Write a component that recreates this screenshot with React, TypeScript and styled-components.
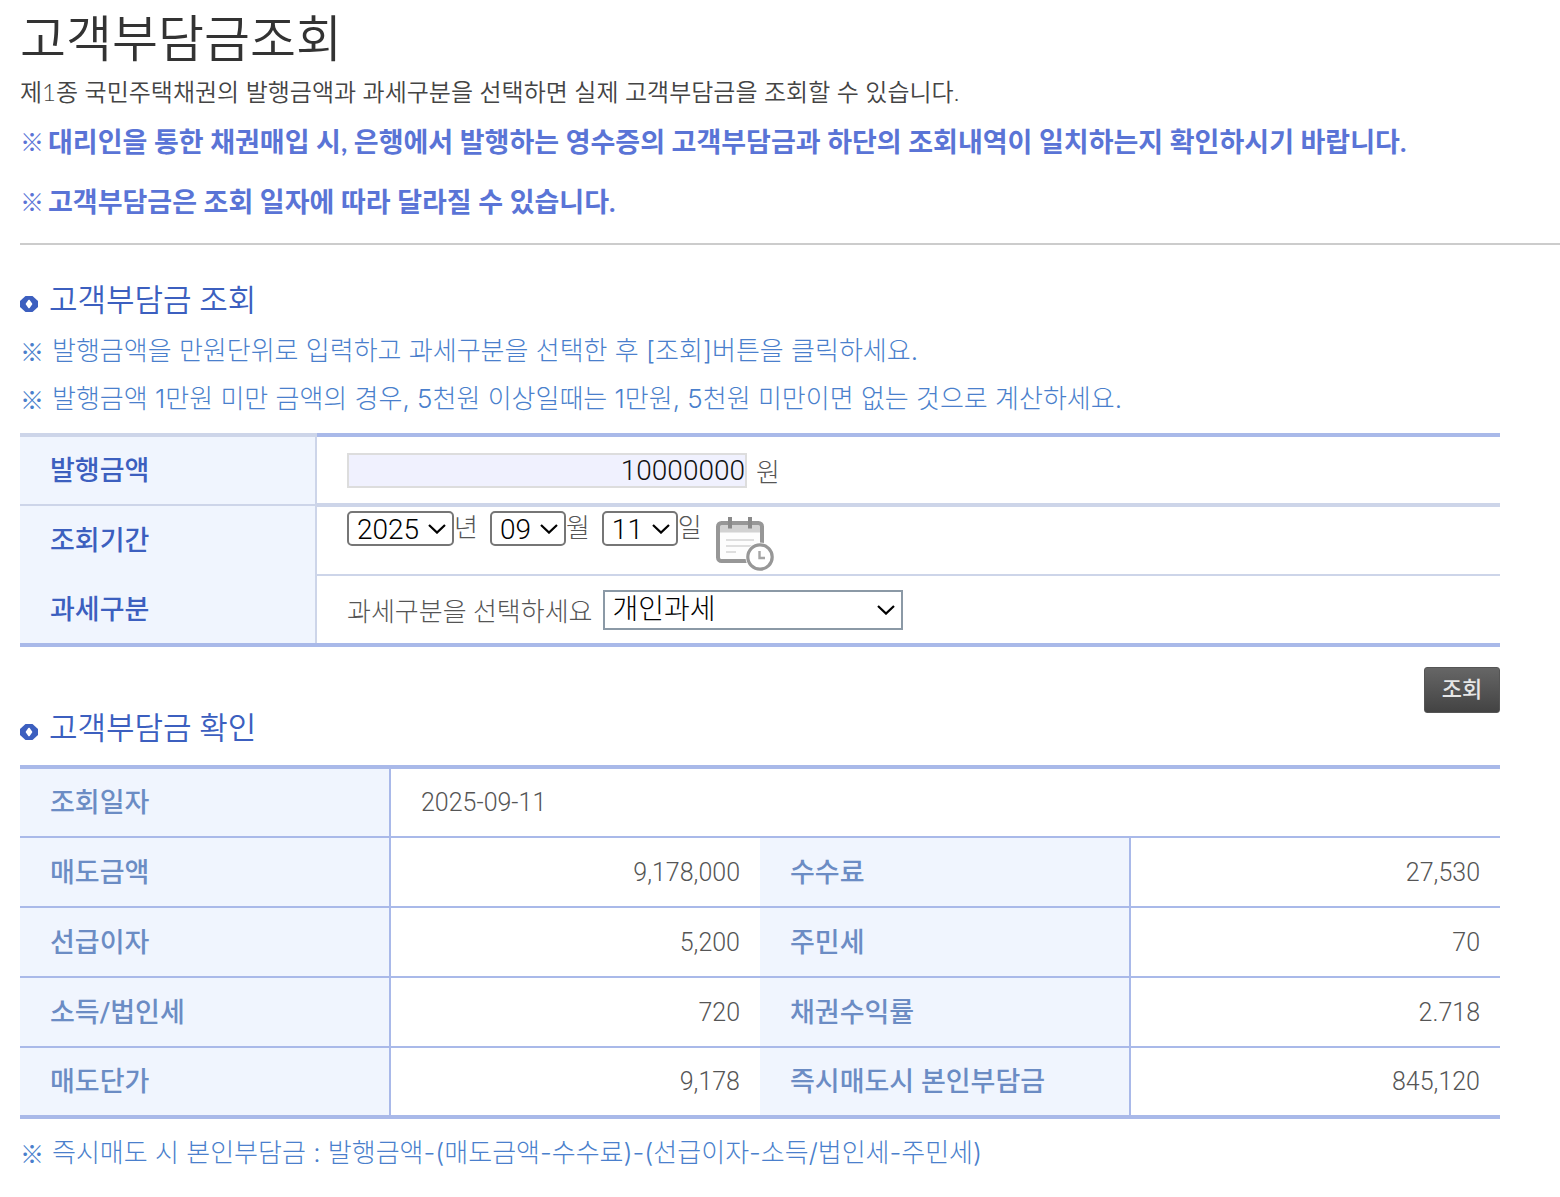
import React from "react";
import styled, { createGlobalStyle } from "styled-components";

const colors = {
  text: "#555555",
  heading: "#3c5fbf",
  note: "#4a7fcc",
  notice: "#5a74d6",
  line: "#a9b9e9",
  softLine: "#cdd5e9",
  labelBg: "#f0f5fe",
};

const GlobalStyle = createGlobalStyle`
  *, *::before, *::after { box-sizing: border-box; }
  body {
    margin: 0;
    background: #ffffff;
    color: ${colors.text};
    font-family: Roboto, "Noto Sans CJK KR", sans-serif;
    font-size: 26px;
    font-weight: 300;
  }
  button, input, select { font-family: inherit; font-weight: inherit; }
`;

const Page = styled.main`
  padding: 0 0 20px 20px;
`;

const Intro = styled.header`
  padding-bottom: 11px;
  border-bottom: 2px solid #cccccc;
  font-family: Lato, "Noto Sans CJK KR", sans-serif;
`;

const Title = styled.h1`
  margin: 0;
  font-size: 50px;
  line-height: 76px;
  font-weight: 350;
  color: #333333;
`;

const Lead = styled.p`
  margin: 0 0 4px;
  font-size: 24px;
  line-height: 32px;
  font-weight: 350;
  color: #444444;
`;

const Notice = styled.p`
  display: flex;
  margin: 0;
  font-size: 27px;
  line-height: 60px;
  font-weight: 700;
  color: ${colors.notice};
`;

const NoticeMark = styled.span`
  width: 28px;
  font-size: 24px;
`;

const Content = styled.div`
  padding: 40px 60px 0 0;
`;

const SectionHead = styled.div<{ $gap: number }>`
  display: flex;
  align-items: center;
  gap: 11px;
  margin-bottom: ${(p) => p.$gap}px;
  svg { margin-top: 6px; }
`;

const SectionTitle = styled.h2`
  margin: 0;
  font-size: 31px;
  line-height: 32px;
  font-weight: 350;
  color: ${colors.heading};
`;

const Note = styled.p`
  display: flex;
  gap: 8px;
  margin: 0;
  font-family: Inter, "Noto Sans CJK KR", sans-serif;
  line-height: 48px;
  color: ${colors.note};
`;

const NoteMark = styled.span`
  font-family: "Noto Sans CJK KR", sans-serif;
  font-size: 24px;
`;

const Table = styled.table`
  width: 100%;
  margin: 10px 0;
  border-collapse: collapse;
  table-layout: fixed;
  tr { height: 70px; }
  th, td { padding: 0 30px; text-align: left; }
  th { padding-bottom: 4px; background: ${colors.labelBg}; font-size: 27px; font-weight: 500; }
`;

const FormTable = styled(Table)`
  margin-bottom: 20px;
  border-bottom: 4px solid ${colors.line};
  th { width: 20%; color: ${colors.heading}; border-right: 2px solid ${colors.softLine}; }
  td { border-bottom: 2px solid ${colors.softLine}; }
  tr:first-child th { border-top: 4px solid ${colors.softLine}; border-bottom: 2px solid ${colors.softLine}; }
  tr:first-child td { border-top: 4px solid ${colors.line}; border-bottom: 4px solid ${colors.softLine}; }
  tr:last-child td { border-bottom: 4px solid ${colors.line}; }
`;

const ResultTable = styled(Table)`
  border-top: 4px solid ${colors.line};
  border-bottom: 4px solid ${colors.line};
  tr + tr { border-top: 2px solid ${colors.line}; }
  th { width: 25%; color: #6b8cc4; border-right: 2px solid ${colors.line}; }
  td { font-size: 25px; }
`;

const Amount = styled.td`
  && { padding-right: 20px; text-align: right; }
`;

const Fields = styled.div<{ $gap: number; $top?: boolean }>`
  display: flex;
  align-items: ${(p) => (p.$top ? "flex-start" : "center")};
  gap: ${(p) => p.$gap}px;
`;

const DatePart = styled.label`
  display: flex;
  align-items: center;
  line-height: 35px;
`;

const AmountInput = styled.input`
  width: 400px;
  height: 35px;
  padding: 0;
  border: 2px solid #dddddd;
  background: #f0f1fe;
  color: #111111;
  font-size: 28px;
  text-align: right;
`;

const SelectBox = styled.span<{ $width: number; $large?: boolean }>`
  position: relative;
  display: inline-flex;
  width: ${(p) => p.$width}px;
  height: ${(p) => (p.$large ? 40 : 35)}px;
  select {
    appearance: none;
    width: 100%;
    padding: 0 8px;
    border: 2px solid ${(p) => (p.$large ? "#8b99a6" : "#767676")};
    border-radius: ${(p) => (p.$large ? 0 : 5)}px;
    background: #ffffff;
    color: #000000;
    font-size: 28px;
  }
  svg {
    position: absolute;
    right: 8px;
    top: calc(50% - 5px);
    pointer-events: none;
  }
`;

const CalendarButton = styled.button`
  display: block;
  margin: 5px 0 0 2px;
  padding: 0;
  border: 0;
  background: none;
  cursor: pointer;
  svg { display: block; }
`;

const DateCell = styled.td`
  vertical-align: top;
  && { padding-top: 4px; }
`;

const Actions = styled.div`
  display: flex;
  justify-content: flex-end;
`;

const SearchButton = styled.button`
  width: 76px;
  height: 46px;
  padding: 0 0 6px;
  border: 1px solid #555555;
  border-radius: 3px;
  background: linear-gradient(#666666, #434343);
  color: #e6e6e6;
  font-size: 22px;
  font-weight: 500;
  cursor: pointer;
`;

function Bullet() {
  return (
    <svg width="18" height="16" viewBox="0 0 18 16" aria-hidden="true">
      <path d="M5.5 0H12.5L18 5V11L12.5 16H5.5L0 11V5Z" fill={colors.heading} />
      <path d="M9 4.5L11.5 8L9 11.5L6.5 8Z" fill="#ffffff" stroke="#ffffff" strokeWidth="1.6" strokeLinejoin="round" />
    </svg>
  );
}

function CalendarIcon() {
  return (
    <svg width="58" height="55" viewBox="0 0 58 55" fill="none" aria-hidden="true">
      <rect x="2" y="7" width="44" height="38" rx="3.5" fill="#fdfdfd" />
      <path d="M2 16.5V10Q2 7 5 7H43Q46 7 46 10V16.5Z" fill="#d2d2d2" />
      <rect x="2" y="7" width="44" height="38" rx="3.5" stroke="#979797" strokeWidth="4" />
      <path d="M14 1V12.5M34 1V12.5" stroke="#8a8a8a" strokeWidth="4" />
      <path d="M10 24H38M10 30H36M10 36H20" stroke="#dedede" strokeWidth="2" />
      <circle cx="44" cy="41" r="14.5" fill="#ffffff" />
      <circle cx="44" cy="41" r="12.2" fill="#ffffff" stroke="#979797" strokeWidth="3.2" />
      <path d="M43.5 35V42H49" stroke="#a5a5a5" strokeWidth="2.4" />
    </svg>
  );
}

type SelectProps = { id: string; width: number; value: string; large?: boolean };

function Select({ id, width, value, large }: SelectProps) {
  return (
    <SelectBox $width={width} $large={large}>
      <select id={id} defaultValue={value}>
        <option>{value}</option>
      </select>
      <svg width="18" height="10" viewBox="0 0 18 10" fill="none" aria-hidden="true">
        <path d="M1 1L9 8.6L17 1" stroke="#000000" strokeWidth="2.2" />
      </svg>
    </SelectBox>
  );
}

const results = [
  ["매도금액", "9,178,000", "수수료", "27,530"],
  ["선급이자", "5,200", "주민세", "70"],
  ["소득/법인세", "720", "채권수익률", "2.718"],
  ["매도단가", "9,178", "즉시매도시 본인부담금", "845,120"],
];

export default function App() {
  return (
    <Page lang="ko">
      <GlobalStyle />
      <Intro>
        <Title>고객부담금조회</Title>
        <Lead>제1종 국민주택채권의 발행금액과 과세구분을 선택하면 실제 고객부담금을 조회할 수 있습니다.</Lead>
        <Notice><NoticeMark>※</NoticeMark><span>대리인을 통한 채권매입 시, 은행에서 발행하는 영수증의 고객부담금과 하단의 조회내역이 일치하는지 확인하시기 바랍니다.</span></Notice>
        <Notice><NoticeMark>※</NoticeMark><span>고객부담금은 조회 일자에 따라 달라질 수 있습니다.</span></Notice>
      </Intro>
      <Content>
        <section>
          <SectionHead $gap={10}>
            <Bullet />
            <SectionTitle>고객부담금 조회</SectionTitle>
          </SectionHead>
          <Note><NoteMark>※</NoteMark><span>발행금액을 만원단위로 입력하고 과세구분을 선택한 후 [조회]버튼을 클릭하세요.</span></Note>
          <Note><NoteMark>※</NoteMark><span>발행금액 1만원 미만 금액의 경우, 5천원 이상일때는 1만원, 5천원 미만이면 없는 것으로 계산하세요.</span></Note>
          <form onSubmit={(e) => e.preventDefault()}>
            <FormTable>
              <tbody>
                <tr>
                  <th scope="row"><label htmlFor="amount">발행금액</label></th>
                  <td>
                    <Fields $gap={9}>
                      <AmountInput id="amount" type="text" inputMode="numeric" defaultValue="10000000" />
                      <span>원</span>
                    </Fields>
                  </td>
                </tr>
                <tr>
                  <th scope="row"><label htmlFor="year">조회기간</label></th>
                  <DateCell>
                    <Fields $gap={12} $top>
                      <DatePart><Select id="year" width={107} value="2025" />년</DatePart>
                      <DatePart><Select id="month" width={76} value="09" />월</DatePart>
                      <DatePart><Select id="day" width={76} value="11" />일</DatePart>
                      <CalendarButton type="button" aria-label="달력"><CalendarIcon /></CalendarButton>
                    </Fields>
                  </DateCell>
                </tr>
                <tr>
                  <th scope="row">과세구분</th>
                  <td>
                    <Fields $gap={10}>
                      <label htmlFor="tax">과세구분을 선택하세요</label>
                      <Select id="tax" width={300} value="개인과세" large />
                    </Fields>
                  </td>
                </tr>
              </tbody>
            </FormTable>
            <Actions>
              <SearchButton type="submit">조회</SearchButton>
            </Actions>
          </form>
        </section>
        <section>
          <SectionHead $gap={20}>
            <Bullet />
            <SectionTitle>고객부담금 확인</SectionTitle>
          </SectionHead>
          <ResultTable>
            <tbody>
              <tr>
                <th scope="row">조회일자</th>
                <td colSpan={3}>2025-09-11</td>
              </tr>
              {results.map(([labelA, valueA, labelB, valueB]) => (
                <tr key={labelA}>
                  <th scope="row">{labelA}</th>
                  <Amount>{valueA}</Amount>
                  <th scope="row">{labelB}</th>
                  <Amount>{valueB}</Amount>
                </tr>
              ))}
            </tbody>
          </ResultTable>
          <Note><NoteMark>※</NoteMark><span>즉시매도 시 본인부담금 : 발행금액-(매도금액-수수료)-(선급이자-소득/법인세-주민세)</span></Note>
        </section>
      </Content>
    </Page>
  );
}
